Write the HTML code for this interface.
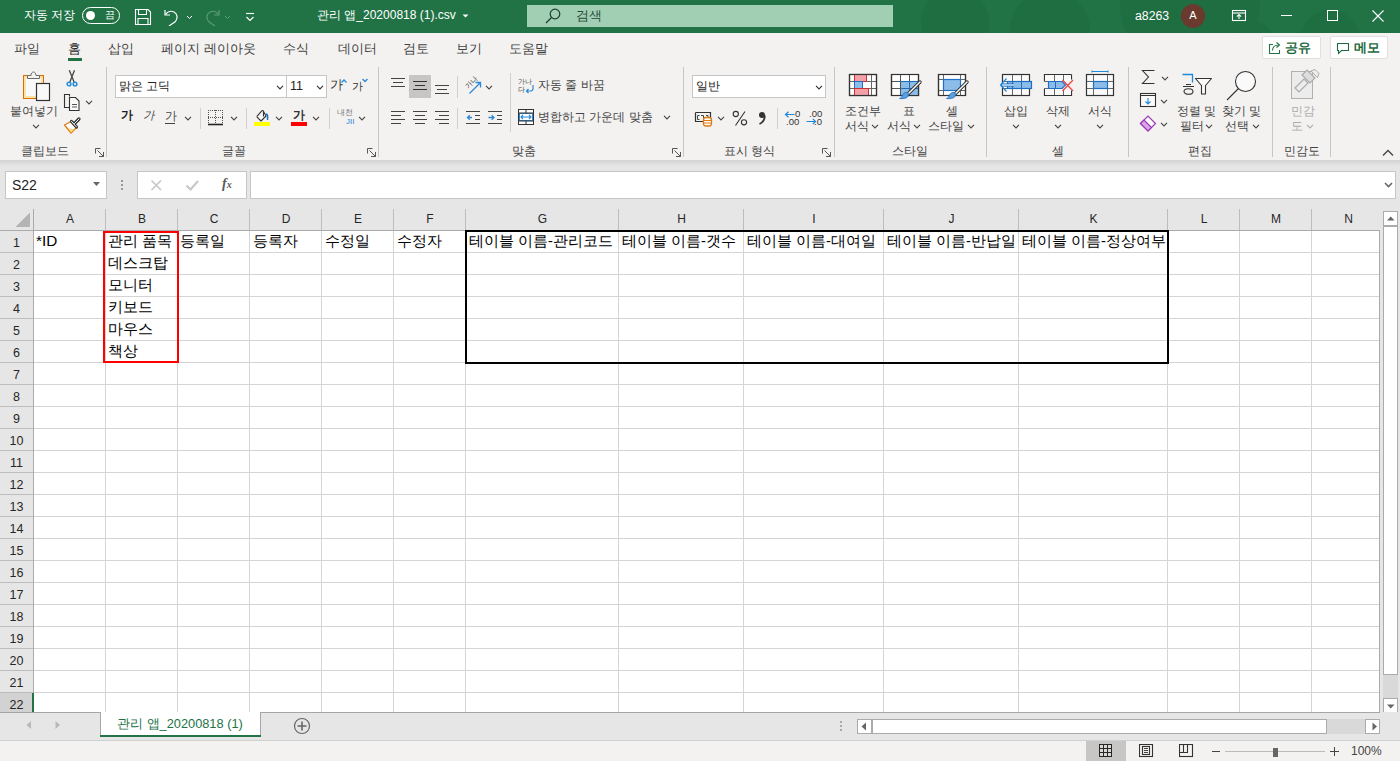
<!DOCTYPE html>
<html><head><meta charset="utf-8">
<style>
*{box-sizing:border-box;margin:0;padding:0}
html,body{width:1400px;height:761px;overflow:hidden;background:#f3f2f1;font-family:"Liberation Sans",sans-serif;color:#262626}
.a{position:absolute}
.t{position:absolute;white-space:nowrap;line-height:1}
#title{left:0;top:0;width:1400px;height:33px;background:#217346;overflow:hidden}
#menu{left:0;top:32px;width:1400px;height:30px}
#ribbon{left:0;top:62px;width:1400px;height:98px}
#fbar{left:0;top:160px;width:1400px;height:49px;background:#e6e6e6}
#grid{left:0;top:209px;width:1400px;height:503px;background:#fff}
#tabs{left:0;top:712px;width:1400px;height:28px;background:#e6e6e6}
#status{left:0;top:741px;width:1400px;height:20px;background:#f3f2f1}
.sep{position:absolute;width:1px;background:#c8c6c4}
.hd{text-align:center;font-size:12px;color:#262626}
.rn{left:0;width:33px;text-align:center;font-size:12.5px;color:#262626;margin-top:1px}
.cell{font-size:14.67px;color:#000}
.mt{top:10px;font-size:13px;color:#424242}
.lbl{font-size:12px;color:#444}
</style></head><body>
<div id="title" class="a"><svg class="a" style="left:0;top:0" width="1400" height="33">
<g fill="#1e6a40" opacity="0.55">
<circle cx="955" cy="22" r="34"/><circle cx="1050" cy="30" r="40"/><circle cx="1190" cy="4" r="70"/><circle cx="1330" cy="40" r="30"/><circle cx="1255" cy="40" r="18"/>
</g>
</svg>
<div class="t" style="left:24px;top:9px;font-size:12px;color:#fff">자동 저장</div>
<div class="a" style="left:82px;top:7px;width:38px;height:17px;border:1px solid #fff;border-radius:9px"></div>
<div class="a" style="left:86px;top:11px;width:9px;height:9px;background:#fff;border-radius:50%"></div>
<div class="t" style="left:105px;top:10px;font-size:10px;color:#fff">끔</div>
<svg class="a" style="left:134px;top:8px" width="18" height="18" fill="none" stroke="#fff" stroke-width="1.1">
<path d="M1.5 1.5h12.5l2.5 2.5v12.5h-15z"/><path d="M4.5 1.5v5h8v-5"/><path d="M4 16.5v-6h10v6"/>
</svg>
<svg class="a" style="left:162px;top:8px" width="34" height="18" fill="none" stroke="#fff" stroke-width="1.2">
<path d="M3 2v5h5"/><path d="M3.5 6.5C5.5 3.5 9 2.5 12 4c3.5 2 4 6 1.5 9.5L7 18"/><path d="M25 8l2.5 2.5L30 8" stroke-width="1"/>
</svg>
<svg class="a" style="left:202px;top:8px" width="34" height="18" fill="none" stroke="#5c9a78" stroke-width="1.2">
<path d="M17 2v5h-5"/><path d="M16.5 6.5C14.5 3.5 11 2.5 8 4c-3.5 2-4 6-1.5 9.5L13 18"/><path d="M23 8l2.5 2.5L28 8" stroke-width="1"/>
</svg>
<svg class="a" style="left:243px;top:10px" width="14" height="14" fill="none" stroke="#fff" stroke-width="1.1">
<path d="M3 3.5h8"/><path d="M3.5 7l3.5 3.5L10.5 7"/>
</svg>
<div class="t" style="left:317px;top:9px;font-size:12px;color:#fff">관리 앱_20200818 (1).csv</div>
<svg class="a" style="left:462px;top:13px" width="8" height="6"><path d="M0.5 1.5h6l-3 3z" fill="#fff"/></svg>
<div class="a" style="left:527px;top:5px;width:366px;height:22px;background:#a0cfb4"></div>
<svg class="a" style="left:544px;top:8px" width="18" height="17" fill="none" stroke="#1f3d2c" stroke-width="1.2">
<circle cx="11" cy="6" r="4.8"/><path d="M7.5 9.5L2 15"/>
</svg>
<div class="t" style="left:576px;top:9px;font-size:13px;color:#2b4a39">검색</div>
<div class="t" style="left:1135px;top:10px;font-size:12.3px;color:#fff">a8263</div>
<div class="a" style="left:1181px;top:4px;width:24px;height:24px;background:#6b3a2f;border-radius:50%"></div>
<div class="t" style="left:1181px;width:24px;text-align:center;top:10px;font-size:11px;color:#fff">A</div>
<svg class="a" style="left:1231px;top:9px" width="16" height="14" fill="none" stroke="#fff" stroke-width="1.1">
<rect x="1.5" y="1.5" width="13" height="10"/><path d="M1.5 4h13"/><path d="M8 10V5.5M5.8 7.7L8 5.5l2.2 2.2"/>
</svg>
<div class="a" style="left:1281px;top:15px;width:11px;height:1px;background:#fff"></div>
<div class="a" style="left:1327px;top:10px;width:11px;height:11px;border:1px solid #fff"></div>
<svg class="a" style="left:1372px;top:10px" width="12" height="12" stroke="#fff" stroke-width="1.1"><path d="M0.5 0.5l11 11M11.5 0.5l-11 11"/></svg>
</div><!--/title-->
<div id="menu" class="a"><div class="t mt" style="left:14px">파일</div>
<div class="t mt" style="left:68px;color:#1b1b1b">홈</div>
<div class="a" style="left:68px;top:26px;width:14px;height:3px;background:#217346"></div>
<div class="t mt" style="left:108px">삽입</div>
<div class="t mt" style="left:161px">페이지 레이아웃</div>
<div class="t mt" style="left:283px">수식</div>
<div class="t mt" style="left:338px">데이터</div>
<div class="t mt" style="left:403px">검토</div>
<div class="t mt" style="left:456px">보기</div>
<div class="t mt" style="left:509px">도움말</div>
<div class="a" style="left:1262px;top:4px;width:59px;height:23px;border:1px solid #e1dfdd;background:#fff;border-radius:2px"></div>
<svg class="a" style="left:1268px;top:9px" width="14" height="14" fill="none" stroke="#217346" stroke-width="1.1">
<path d="M5 3.5H1.5v9h10V9"/><path d="M4.5 9.5c0-3.5 2.5-5.5 6-5.5"/><path d="M8.5 1.5l3 2.5-3 2.5"/>
</svg>
<div class="t" style="left:1285px;top:9px;font-size:13px;font-weight:bold;color:#1f6b40">공유</div>
<div class="a" style="left:1330px;top:4px;width:58px;height:23px;border:1px solid #e1dfdd;background:#fff;border-radius:2px"></div>
<svg class="a" style="left:1336px;top:10px" width="14" height="13" fill="none" stroke="#1f6b40" stroke-width="1.1">
<path d="M1.5 1.5h11v7h-7l-3 3v-3h-1z"/>
</svg>
<div class="t" style="left:1354px;top:9px;font-size:13px;font-weight:bold;color:#1f6b40">메모</div>
</div><!--/menu-->
<div id="ribbon" class="a"><div class="a" style="left:106px;top:5px;width:1px;height:90px;background:#c8c6c4"></div>
<div class="a" style="left:378px;top:5px;width:1px;height:90px;background:#c8c6c4"></div>
<div class="a" style="left:683px;top:5px;width:1px;height:90px;background:#c8c6c4"></div>
<div class="a" style="left:834px;top:5px;width:1px;height:90px;background:#c8c6c4"></div>
<div class="a" style="left:986px;top:5px;width:1px;height:90px;background:#c8c6c4"></div>
<div class="a" style="left:1128px;top:5px;width:1px;height:90px;background:#c8c6c4"></div>
<div class="a" style="left:1272px;top:5px;width:1px;height:90px;background:#c8c6c4"></div>
<div class="a" style="left:1330px;top:5px;width:1px;height:90px;background:#c8c6c4"></div>
<div class="t" style="left:21px;top:83px;font-size:12px;color:#444;">클립보드</div>
<div class="t" style="left:222px;top:83px;font-size:12px;color:#444;">글꼴</div>
<div class="t" style="left:512px;top:83px;font-size:12px;color:#444;">맞춤</div>
<div class="t" style="left:724px;top:83px;font-size:12px;color:#444;">표시 형식</div>
<div class="t" style="left:892px;top:83px;font-size:12px;color:#444;">스타일</div>
<div class="t" style="left:1052px;top:83px;font-size:12px;color:#444;">셀</div>
<div class="t" style="left:1188px;top:83px;font-size:12px;color:#444;">편집</div>
<div class="t" style="left:1284px;top:83px;font-size:12px;color:#444;">민감도</div>
<svg class="a" style="left:95px;top:86px" width="9" height="9"><path d="M0.5 0.5h5M0.5 0.5v5M2.5 2.5l6 6M8.5 4v4.5H4" fill="none" stroke="#555" stroke-width="1"/></svg>
<svg class="a" style="left:367px;top:86px" width="9" height="9"><path d="M0.5 0.5h5M0.5 0.5v5M2.5 2.5l6 6M8.5 4v4.5H4" fill="none" stroke="#555" stroke-width="1"/></svg>
<svg class="a" style="left:672px;top:86px" width="9" height="9"><path d="M0.5 0.5h5M0.5 0.5v5M2.5 2.5l6 6M8.5 4v4.5H4" fill="none" stroke="#555" stroke-width="1"/></svg>
<svg class="a" style="left:822px;top:86px" width="9" height="9"><path d="M0.5 0.5h5M0.5 0.5v5M2.5 2.5l6 6M8.5 4v4.5H4" fill="none" stroke="#555" stroke-width="1"/></svg>
<svg class="a" style="left:1382px;top:87px" width="12" height="8"><path d="M1 6.5l5-5 5 5" fill="none" stroke="#444" stroke-width="1.3"/></svg>
<svg class="a" style="left:21px;top:7px" width="32" height="34"><rect x="2.5" y="6.5" width="20" height="23" fill="#fbe3a8" stroke="#d96f00" stroke-width="1"/><rect x="5" y="9" width="15" height="18" fill="#f9f9f9"/><path d="M6.5 9.5v-3h3.5c0-2 1.2-3.5 2.5-3.5s2.5 1.5 2.5 3.5h3.5v3z" fill="#f3f3f3" stroke="#6a6a6a" stroke-width="1"/><rect x="15.5" y="14.5" width="13" height="17" fill="#f9f9f9" stroke="#333" stroke-width="1.2"/></svg>
<div class="t" style="left:10px;top:43px;font-size:12px;color:#444;">붙여넣기</div>
<svg class="a" style="left:32px;top:62px" width="8" height="6"><path d="M1 0.9L4.0 3.9L7 0.9" fill="none" stroke="#444" stroke-width="1.1"/></svg>
<svg class="a" style="left:60px;top:4px" width="24" height="24"><path d="M9.3 4.2l5.4 13.3M14.5 4.2L9.3 17.5" fill="none" stroke="#444" stroke-width="1.3"/><circle cx="9" cy="18" r="1.9" fill="#cfe4f7" stroke="#1e88d8" stroke-width="1.4"/><circle cx="15" cy="18" r="1.9" fill="#cfe4f7" stroke="#1e88d8" stroke-width="1.4"/></svg>
<svg class="a" style="left:63px;top:31px" width="18" height="18"><path d="M6.5 3.5V1.5h-5v13h5" fill="none" stroke="#333" stroke-width="1.1"/><path d="M6.5 4.5h6l3.5 3.5v9.5h-9.5z" fill="#fafafa" stroke="#333" stroke-width="1.1"/><path d="M9 11.5h5M9 14h5" stroke="#555" stroke-width="1"/></svg>
<svg class="a" style="left:85px;top:38px" width="8" height="6"><path d="M1 0.9L4.0 3.9L7 0.9" fill="none" stroke="#444" stroke-width="1.1"/></svg>
<svg class="a" style="left:60px;top:52px" width="24" height="24"><path d="M4.5 11L11 7.5l5.5 6L11 19z" fill="#fff" stroke="#e07a10" stroke-width="1.3" stroke-linejoin="round"/><path d="M8 14.5l6.5 0.5L11 18.5z" fill="#fbd77a"/><path d="M19 5L14.5 9.5M11.5 7.5L16.5 13" stroke="#333" stroke-width="3.2" stroke-linecap="round"/><path d="M19 5L14.5 9.5M11.5 7.5L16.5 13" stroke="#fff" stroke-width="1" stroke-linecap="round"/></svg>
<div class="a" style="left:115px;top:13px;width:172px;height:23px;border:1px solid #c6c6c6;background:#fff"></div>
<div class="t" style="left:119px;top:18px;font-size:12px;color:#222;">맑은 고딕</div>
<svg class="a" style="left:276px;top:23px" width="8" height="6"><path d="M1 0.9L4.0 3.9L7 0.9" fill="none" stroke="#333" stroke-width="1.1"/></svg>
<div class="a" style="left:286px;top:13px;width:41px;height:23px;border:1px solid #c6c6c6;background:#fff"></div>
<div class="t" style="left:290px;top:18px;font-size:12.5px;color:#222;">11</div>
<svg class="a" style="left:316px;top:23px" width="8" height="6"><path d="M1 0.9L4.0 3.9L7 0.9" fill="none" stroke="#333" stroke-width="1.1"/></svg>
<div class="t" style="left:330px;top:17px;font-size:12.5px;color:#333;">가</div>
<svg class="a" style="left:341px;top:17px" width="7" height="5"><path d="M0.5 3.5l2.5-2.5 2.5 2.5" fill="none" stroke="#2b88d8" stroke-width="1.3"/></svg>
<div class="t" style="left:352px;top:19px;font-size:11px;color:#333;">가</div>
<svg class="a" style="left:362px;top:16px" width="7" height="5"><path d="M0.5 1l2.5 2.5L5.5 1" fill="none" stroke="#2b88d8" stroke-width="1.3"/></svg>
<div class="t" style="left:121px;top:48px;font-size:11.5px;color:#222;font-weight:bold">가</div>
<div class="t" style="left:143px;top:48px;font-size:11.5px;color:#444;font-style:italic">가</div>
<div class="t" style="left:165px;top:48px;font-size:12px;color:#444;">가</div>
<div class="a" style="left:165px;top:61px;width:10px;height:1px;background:#444"></div>
<svg class="a" style="left:184px;top:54px" width="8" height="6"><path d="M1 0.9L4.0 3.9L7 0.9" fill="none" stroke="#444" stroke-width="1.1"/></svg>
<div class="a" style="left:200px;top:46px;width:1px;height:21px;background:#d2d0ce"></div>
<svg class="a" style="left:207px;top:47px" width="17" height="17"><path d="M1.5 1v14M15.5 1v14M8.5 1v14M1 1.5h15M1 8.5h15" fill="none" stroke="#555" stroke-width="1" stroke-dasharray="1 1"/><path d="M1 15.5h15" stroke="#222" stroke-width="1.6"/></svg>
<svg class="a" style="left:230px;top:54px" width="8" height="6"><path d="M1 0.9L4.0 3.9L7 0.9" fill="none" stroke="#444" stroke-width="1.1"/></svg>
<div class="a" style="left:246px;top:46px;width:1px;height:21px;background:#d2d0ce"></div>
<svg class="a" style="left:254px;top:45px" width="16" height="16"><path d="M2.7 9.7L7.3 4.3c0.8-1 2-1.2 2.2 0.3v5M2.7 9.7L7 14l5-5-3-5.5" fill="#fafafa" stroke="#333" stroke-width="1.1" stroke-linejoin="round"/><path d="M12 7.3c1.5-0.5 1.8 2 1.5 5" fill="none" stroke="#1e6fc4" stroke-width="1.6" stroke-linecap="round"/></svg>
<div class="a" style="left:254px;top:60px;width:16px;height:4px;background:#ffff00"></div>
<svg class="a" style="left:275px;top:54px" width="8" height="6"><path d="M1 0.9L4.0 3.9L7 0.9" fill="none" stroke="#444" stroke-width="1.1"/></svg>
<div class="t" style="left:293px;top:47px;font-size:12px;color:#333;font-weight:bold">가</div>
<div class="a" style="left:291px;top:60px;width:16px;height:4px;background:#ff0000"></div>
<svg class="a" style="left:312px;top:54px" width="8" height="6"><path d="M1 0.9L4.0 3.9L7 0.9" fill="none" stroke="#444" stroke-width="1.1"/></svg>
<div class="a" style="left:329px;top:46px;width:1px;height:21px;background:#d2d0ce"></div>
<div class="t" style="left:337px;top:47px;font-size:8px;color:#777;">내천</div>
<div class="t" style="left:346px;top:56px;font-size:8px;color:#2b88d8;">JII</div>
<svg class="a" style="left:358px;top:54px" width="8" height="6"><path d="M1 0.9L4.0 3.9L7 0.9" fill="none" stroke="#444" stroke-width="1.1"/></svg>
<!--R2--><div class="a" style="left:409px;top:13px;width:22px;height:23px;background:#c8c6c4"></div>
<svg class="a" style="left:391px;top:16px" width="15" height="10"><rect x="0" y="0" width="14" height="1" fill="#444"/><rect x="2" y="4" width="10" height="1" fill="#444"/><rect x="0" y="8" width="14" height="1" fill="#444"/></svg>
<svg class="a" style="left:413px;top:19px" width="15" height="10"><rect x="0" y="0" width="14" height="1" fill="#333"/><rect x="2" y="4" width="10" height="1" fill="#333"/><rect x="0" y="8" width="14" height="1" fill="#333"/></svg>
<svg class="a" style="left:435px;top:23px" width="15" height="10"><rect x="0" y="0" width="14" height="1" fill="#444"/><rect x="2" y="4" width="10" height="1" fill="#444"/><rect x="0" y="8" width="14" height="1" fill="#444"/></svg>
<div class="a" style="left:457px;top:14px;width:1px;height:22px;background:#d2d0ce"></div>
<div class="t" style="left:464px;top:17px;font-size:7px;color:#444;"><span style="display:inline-block;transform:rotate(-45deg)">가나</span></div>
<svg class="a" style="left:468px;top:18px" width="15" height="15"><path d="M1.5 13.5L12.5 2.5M7.5 2.5h5v5" fill="none" stroke="#2b88d8" stroke-width="1.3"/></svg>
<svg class="a" style="left:485px;top:23px" width="8" height="6"><path d="M1 0.9L4.0 3.9L7 0.9" fill="none" stroke="#444" stroke-width="1.1"/></svg>
<svg class="a" style="left:391px;top:49px" width="15" height="14"><rect x="0" y="0" width="14" height="1" fill="#444"/><rect x="0" y="4" width="10" height="1" fill="#444"/><rect x="0" y="8" width="14" height="1" fill="#444"/><rect x="0" y="12" width="10" height="1" fill="#444"/></svg>
<svg class="a" style="left:413px;top:49px" width="15" height="14"><rect x="0" y="0" width="14" height="1" fill="#444"/><rect x="2" y="4" width="10" height="1" fill="#444"/><rect x="0" y="8" width="14" height="1" fill="#444"/><rect x="2" y="12" width="10" height="1" fill="#444"/></svg>
<svg class="a" style="left:435px;top:49px" width="15" height="14"><rect x="0" y="0" width="14" height="1" fill="#444"/><rect x="4" y="4" width="10" height="1" fill="#444"/><rect x="0" y="8" width="14" height="1" fill="#444"/><rect x="4" y="12" width="10" height="1" fill="#444"/></svg>
<div class="a" style="left:457px;top:46px;width:1px;height:21px;background:#d2d0ce"></div>
<svg class="a" style="left:466px;top:49px" width="15" height="14"><rect x="0" y="0" width="14" height="1" fill="#444"/><rect x="9" y="4" width="5" height="1" fill="#444"/><rect x="9" y="8" width="5" height="1" fill="#444"/><rect x="0" y="12" width="14" height="1" fill="#444"/><path d="M6 6.5H1.5M3.8 4.2L1.5 6.5l2.3 2.3" fill="none" stroke="#2b88d8" stroke-width="1.3"/></svg>
<svg class="a" style="left:488px;top:49px" width="15" height="14"><rect x="0" y="0" width="14" height="1" fill="#444"/><rect x="9" y="4" width="5" height="1" fill="#444"/><rect x="9" y="8" width="5" height="1" fill="#444"/><rect x="0" y="12" width="14" height="1" fill="#444"/><path d="M0.5 6.5H6M3.7 4.2L6 6.5 3.7 8.8" fill="none" stroke="#2b88d8" stroke-width="1.3"/></svg>
<div class="a" style="left:510px;top:11px;width:1px;height:59px;background:#d2d0ce"></div>
<div class="t" style="left:518px;top:16px;font-size:7px;color:#444;">가나</div>
<div class="t" style="left:518px;top:24px;font-size:7px;color:#444;">다</div>
<svg class="a" style="left:525px;top:22px" width="10" height="10"><path d="M8 1v3.5c0 1.5-1 2.5-2.5 2.5H1.5M3.5 5L1.5 7l2 2" fill="none" stroke="#2b88d8" stroke-width="1.2"/></svg>
<div class="t" style="left:538px;top:17px;font-size:12px;color:#444;">자동 줄 바꿈</div>
<svg class="a" style="left:518px;top:47px" width="16" height="16"><rect x="0.5" y="0.5" width="15" height="15" fill="#fff" stroke="#333"/><rect x="1" y="4" width="14" height="8" fill="#2b88d8"/><rect x="2" y="5" width="12" height="6" fill="#fff"/><path d="M0.5 4h15M0.5 12h15M8 0.5v3.5M8 12v3.5" stroke="#333"/><path d="M3 8h10M5 6l-2 2 2 2M11 6l2 2-2 2" fill="none" stroke="#2b88d8" stroke-width="1.1"/></svg>
<div class="t" style="left:538px;top:49px;font-size:12px;color:#444;">병합하고 가운데 맞춤</div>
<svg class="a" style="left:663px;top:53px" width="8" height="6"><path d="M1 0.9L4.0 3.9L7 0.9" fill="none" stroke="#444" stroke-width="1.1"/></svg>
<div class="a" style="left:692px;top:13px;width:134px;height:23px;border:1px solid #c6c6c6;background:#fff"></div>
<div class="t" style="left:696px;top:18px;font-size:12px;color:#222;">일반</div>
<svg class="a" style="left:815px;top:23px" width="8" height="6"><path d="M1 0.9L4.0 3.9L7 0.9" fill="none" stroke="#333" stroke-width="1.1"/></svg>
<svg class="a" style="left:694px;top:49px" width="20" height="16"><path d="M1.5 1.5h15v9" fill="none" stroke="#333" stroke-width="1.2"/><path d="M1.5 1.5v9h8" fill="none" stroke="#333" stroke-width="1.2"/><path d="M5.5 4.5h-2v4h2M7 4.5h2.5v4M12 4.5h2v2" fill="none" stroke="#333" stroke-width="0.9"/><rect x="9.5" y="6.5" width="8" height="8.5" rx="2.5" fill="#fff" stroke="#e07a10" stroke-width="1.3"/><path d="M9.5 9.5h8M9.5 12h8" stroke="#e07a10" stroke-width="1.1"/></svg>
<svg class="a" style="left:717px;top:54px" width="8" height="6"><path d="M1 0.9L4.0 3.9L7 0.9" fill="none" stroke="#444" stroke-width="1.1"/></svg>
<svg class="a" style="left:732px;top:48px" width="17" height="17"><circle cx="3.8" cy="4" r="2.6" fill="none" stroke="#333" stroke-width="1.1"/><circle cx="12" cy="12.3" r="2.6" fill="none" stroke="#333" stroke-width="1.1"/><path d="M13 1.5L3.5 15.5" stroke="#333" stroke-width="1.1"/></svg>
<svg class="a" style="left:757px;top:49px" width="10" height="15"><circle cx="5" cy="4" r="3" fill="#333"/><path d="M7.8 4.5c0 4-2 7-5.3 8.5" fill="none" stroke="#333" stroke-width="1.8"/></svg>
<div class="a" style="left:777px;top:46px;width:1px;height:21px;background:#d2d0ce"></div>
<svg class="a" style="left:784px;top:49px" width="18" height="16"><path d="M10.5 3.5H1.5M4.5 0.8L1.5 3.5l3 2.7" fill="none" stroke="#1e88d8" stroke-width="1.2"/></svg>
<div class="t" style="left:795px;top:47px;font-size:9.5px;color:#333;">0</div>
<div class="t" style="left:786px;top:55px;font-size:9.5px;color:#333;">.00</div>
<div class="t" style="left:809px;top:47px;font-size:9.5px;color:#333;">.00</div>
<svg class="a" style="left:806px;top:55px" width="12" height="9"><path d="M0.5 4.5h9M6.8 1.8l2.7 2.7-2.7 2.7" fill="none" stroke="#1e88d8" stroke-width="1.2"/></svg>
<div class="t" style="left:814px;top:55px;font-size:9.5px;color:#333;">.0</div>
<svg class="a" style="left:847px;top:10px" width="32" height="28"><rect x="2.5" y="2.5" width="27" height="21" fill="#fff" stroke="#333" stroke-width="1.2"/><path d="M7.5 3v20M24.5 3v20M3 9.5h26M3 16.5h26" stroke="#666"/><rect x="7.5" y="2.5" width="12" height="7" fill="#f4a0a8" stroke="#d32f2f"/><rect x="7.5" y="9.5" width="8" height="7" fill="#8bbde8" stroke="#1e6fc4"/><rect x="7.5" y="16.5" width="14" height="7" fill="#f4a0a8" stroke="#d32f2f"/><rect x="2.5" y="2.5" width="27" height="21" fill="none" stroke="#333" stroke-width="1.2"/></svg>
<div class="t" style="left:845px;top:43px;font-size:12px;color:#444;">조건부</div>
<div class="t" style="left:845px;top:58px;font-size:12px;color:#444;">서식</div>
<svg class="a" style="left:871px;top:62px" width="8" height="6"><path d="M1 0.9L4.0 3.9L7 0.9" fill="none" stroke="#444" stroke-width="1.1"/></svg>
<svg class="a" style="left:889px;top:10px" width="34" height="30"><rect x="2.5" y="2.5" width="27" height="21" fill="#fff" stroke="#333" stroke-width="1.2"/><rect x="11.5" y="9.5" width="18" height="14" fill="#8bbde8" stroke="#1e6fc4" stroke-width="1.1"/><path d="M11.5 3v6.5M20.5 3v20M3 9.5h8.5M3 16.5h26M11.5 9.5v14" stroke="#555"/><path d="M20.5 9.5v14M11.5 16.5h18" stroke="#1e6fc4" stroke-width="0.8"/><path d="M2.5 2.5h27v21h-27z" fill="none" stroke="#333" stroke-width="1.2"/><path d="M31 10L18 23" stroke="#333" stroke-width="3.4" stroke-linecap="round"/><path d="M31 10L18 23" stroke="#fff" stroke-width="1.4" stroke-linecap="round"/><path d="M19.5 21.5c-2-2-5-1-6 1.5-0.5 1.5-1 3-3 3.5 3 0.5 7 0 8.5-2z" fill="#5a9fe0" stroke="#1e6fc4" stroke-width="0.8"/></svg>
<div class="t" style="left:903px;top:43px;font-size:12px;color:#444;">표</div>
<div class="t" style="left:887px;top:58px;font-size:12px;color:#444;">서식</div>
<svg class="a" style="left:913px;top:62px" width="8" height="6"><path d="M1 0.9L4.0 3.9L7 0.9" fill="none" stroke="#444" stroke-width="1.1"/></svg>
<svg class="a" style="left:936px;top:10px" width="34" height="30"><rect x="2.5" y="2.5" width="27" height="21" fill="#fff" stroke="#333" stroke-width="1.2"/><path d="M7.5 3v20M3 7.5h26M3 18.5h26M24.5 3v20" stroke="#666"/><rect x="7.5" y="7.5" width="17" height="11" fill="#8bbde8" stroke="#1e6fc4" stroke-width="1.2"/><path d="M2.5 2.5h27v21h-27z" fill="none" stroke="#333" stroke-width="1.2"/><path d="M31 10L18 23" stroke="#333" stroke-width="3.4" stroke-linecap="round"/><path d="M31 10L18 23" stroke="#fff" stroke-width="1.4" stroke-linecap="round"/><path d="M19.5 21.5c-2-2-5-1-6 1.5-0.5 1.5-1 3-3 3.5 3 0.5 7 0 8.5-2z" fill="#5a9fe0" stroke="#1e6fc4" stroke-width="0.8"/></svg>
<div class="t" style="left:946px;top:43px;font-size:12px;color:#444;">셀</div>
<div class="t" style="left:928px;top:58px;font-size:12px;color:#444;">스타일</div>
<svg class="a" style="left:967px;top:62px" width="8" height="6"><path d="M1 0.9L4.0 3.9L7 0.9" fill="none" stroke="#444" stroke-width="1.1"/></svg>
<svg class="a" style="left:998px;top:10px" width="36" height="26"><rect x="4.5" y="2.5" width="27" height="21" fill="#fafafa" stroke="#333" stroke-width="1.2"/><path d="M14.5 3v20M23.5 3v20M5 9.5h26M5 16.5h26" stroke="#666"/><rect x="9.5" y="9.5" width="24" height="7" fill="#8bbde8" stroke="#1e6fc4" stroke-width="1.2"/><path d="M23.5 10v6M14.5 10v6" stroke="#1e6fc4"/><path d="M16 13H3" stroke="#1e6fc4" stroke-width="3.2"/><path d="M16 13H4" stroke="#fff" stroke-width="1.2"/><path d="M8.5 6.5L2.5 13l6 6.5" fill="none" stroke="#1e88d8" stroke-width="1.2"/></svg>
<div class="t" style="left:1004px;top:43px;font-size:12px;color:#444;">삽입</div>
<svg class="a" style="left:1012px;top:62px" width="8" height="6"><path d="M1 0.9L4.0 3.9L7 0.9" fill="none" stroke="#444" stroke-width="1.1"/></svg>
<svg class="a" style="left:1042px;top:10px" width="36" height="26"><path d="M2.5 9.5v-7h27M29.5 2.5v5M2.5 16.5v7h27v-5" fill="none" stroke="#333" stroke-width="1.2"/><rect x="3" y="3" width="26" height="6" fill="#fafafa"/><rect x="3" y="17" width="26" height="6" fill="#fafafa"/><path d="M12.5 3v6M21.5 3v6M12.5 17v6M21.5 17v6M2.5 9.5h18M2.5 16.5h18" stroke="#666"/><path d="M6.5 9.5h13.5l3.5 3.5-3.5 3.5H6.5z" fill="#8bbde8" stroke="#1e6fc4" stroke-width="1.2"/><path d="M13.5 10v6" stroke="#1e6fc4"/><path d="M20.5 8l10.5 11M31 8L20.5 19" stroke="#ec4848" stroke-width="1.3"/></svg>
<div class="t" style="left:1046px;top:43px;font-size:12px;color:#444;">삭제</div>
<svg class="a" style="left:1054px;top:62px" width="8" height="6"><path d="M1 0.9L4.0 3.9L7 0.9" fill="none" stroke="#444" stroke-width="1.1"/></svg>
<svg class="a" style="left:1084px;top:6px" width="32" height="30"><path d="M8 2.5v2M24 2.5v2M8 3.5h16" stroke="#1e88d8" stroke-width="1.2"/><rect x="2.5" y="6.5" width="27" height="21" fill="#fafafa" stroke="#333" stroke-width="1.2"/><path d="M9.5 7v20M23.5 7v20M3 13.5h26M3 20.5h26" stroke="#666"/><rect x="9.5" y="13.5" width="14" height="7" fill="#8bbde8" stroke="#1e6fc4" stroke-width="1.2"/></svg>
<div class="t" style="left:1088px;top:43px;font-size:12px;color:#444;">서식</div>
<svg class="a" style="left:1096px;top:62px" width="8" height="6"><path d="M1 0.9L4.0 3.9L7 0.9" fill="none" stroke="#444" stroke-width="1.1"/></svg>
<svg class="a" style="left:1140px;top:6px" width="16" height="18"><path d="M14.5 2.5H2.5L8.5 9 2.5 15.5h12" fill="none" stroke="#333" stroke-width="1.1"/></svg>
<svg class="a" style="left:1161px;top:14px" width="8" height="6"><path d="M1 0.9L4.0 3.9L7 0.9" fill="none" stroke="#444" stroke-width="1.1"/></svg>
<svg class="a" style="left:1139px;top:30px" width="18" height="16"><rect x="1.5" y="1.5" width="15" height="13" fill="#fafafa" stroke="#333" stroke-width="1.1"/><path d="M1.5 3.5h15" stroke="#333"/><path d="M9 6v6M6.5 9.5L9 12l2.5-2.5" fill="none" stroke="#1e88d8" stroke-width="1.1"/></svg>
<svg class="a" style="left:1160px;top:37px" width="8" height="6"><path d="M1 0.9L4.0 3.9L7 0.9" fill="none" stroke="#444" stroke-width="1.1"/></svg>
<svg class="a" style="left:1139px;top:52px" width="18" height="18"><path d="M1.5 9.5L9 2l7.5 7.5L9 17z" fill="#fafafa" stroke="#9b36b7" stroke-width="1.2"/><path d="M1.5 9.5L5 6l7.5 7.5L9 17z" fill="#d9a6e6" stroke="#9b36b7" stroke-width="1.2"/></svg>
<svg class="a" style="left:1160px;top:60px" width="8" height="6"><path d="M1 0.9L4.0 3.9L7 0.9" fill="none" stroke="#444" stroke-width="1.1"/></svg>
<svg class="a" style="left:1180px;top:10px" width="34" height="26"><path d="M2.5 2.5h10v8" fill="none" stroke="#1e88d8" stroke-width="1.3"/><path d="M3 14.5h11M6 12.5h5" stroke="#333" stroke-width="1.1"/><ellipse cx="8.5" cy="19.5" rx="4.5" ry="2.8" fill="none" stroke="#333" stroke-width="1.1"/><path d="M15.5 6.5h16l-6 7v8.5h-4V13.5z" fill="#fafafa" stroke="#333" stroke-width="1.1" stroke-linejoin="round"/></svg>
<svg class="a" style="left:1225px;top:7px" width="34" height="34"><circle cx="20.5" cy="12.5" r="10" fill="#fafafa" stroke="#333" stroke-width="1.1"/><path d="M13.5 19.5L2 31" stroke="#333" stroke-width="1.1"/></svg>
<div class="t" style="left:1177px;top:43px;font-size:12px;color:#444;">정렬 및</div>
<div class="t" style="left:1180px;top:58px;font-size:12px;color:#444;">필터</div>
<svg class="a" style="left:1205px;top:62px" width="8" height="6"><path d="M1 0.9L4.0 3.9L7 0.9" fill="none" stroke="#444" stroke-width="1.1"/></svg>
<div class="t" style="left:1222px;top:43px;font-size:12px;color:#444;">찾기 및</div>
<div class="t" style="left:1225px;top:58px;font-size:12px;color:#444;">선택</div>
<svg class="a" style="left:1252px;top:62px" width="8" height="6"><path d="M1 0.9L4.0 3.9L7 0.9" fill="none" stroke="#444" stroke-width="1.1"/></svg>
<svg class="a" style="left:1290px;top:7px" width="30" height="31"><path d="M1.5 2.5h11M1.5 2.5v27h21V17" fill="#eeeeee" stroke="#aaa"/><rect x="1.5" y="2.5" width="21" height="27" fill="#ececec" stroke="#b0b0b0"/><path d="M5 19l9-9 4 4-9 9z" fill="#ececec" stroke="#aaa" stroke-width="1.2"/><path d="M12 6l5-5 8 8-5 5z" fill="#ddd" stroke="#aaa" stroke-width="1.2"/><path d="M21 2l4-1.5 4 4-1.5 4z" fill="#eee" stroke="#aaa"/></svg>
<div class="t" style="left:1291px;top:43px;font-size:12px;color:#aaa;">민감</div>
<div class="t" style="left:1291px;top:58px;font-size:12px;color:#aaa;">도</div>
<svg class="a" style="left:1306px;top:62px" width="8" height="6"><path d="M1 0.9L4.0 3.9L7 0.9" fill="none" stroke="#aaa" stroke-width="1.1"/></svg><!--/R2-->
</div><!--/ribbon-->
<div id="fbar" class="a"><div class="a" style="left:0;top:0;width:1400px;height:6px;background:linear-gradient(#d2d2d2,#e6e6e6)"></div>
<div class="a" style="left:5px;top:11px;width:102px;height:28px;border:1px solid #c6c6c6;background:#fff"></div>
<div class="t" style="left:12px;top:18px;font-size:14px;color:#222">S22</div>
<svg class="a" style="left:93px;top:22px" width="8" height="5"><path d="M0 0h7l-3.5 4z" fill="#666"/></svg>
<svg class="a" style="left:121px;top:20px" width="3" height="11"><rect x="0" y="0" width="2" height="2" fill="#999"/><rect x="0" y="4" width="2" height="2" fill="#999"/><rect x="0" y="8" width="2" height="2" fill="#999"/></svg>
<div class="a" style="left:137px;top:11px;width:110px;height:28px;border:1px solid #c6c6c6;background:#fff"></div>
<svg class="a" style="left:150px;top:19px" width="13" height="12"><path d="M1.5 1.5l9.5 9.5M11 1.5L1.5 11" stroke="#c8c8c8" stroke-width="1.7"/></svg>
<svg class="a" style="left:185px;top:19px" width="14" height="12"><path d="M1.5 6.5l4 4 7.5-8.5" fill="none" stroke="#c8c8c8" stroke-width="2.2"/></svg>
<div class="t" style="left:222px;top:177px;font-size:14px;color:#5a5a5a;font-family:'Liberation Serif',serif;font-style:italic;font-weight:bold;top:17px">f<span style="font-size:10px">x</span></div>
<div class="a" style="left:250px;top:11px;width:1146px;height:28px;border:1px solid #c6c6c6;background:#fff"></div>
<svg class="a" style="left:1384px;top:22px" width="9" height="6"><path d="M1 1l3.5 3.5L8 1" fill="none" stroke="#666" stroke-width="1.6"/></svg></div><!--/fbar-->
<div id="grid" class="a"><svg class="a" style="left:0;top:0" width="1400" height="503" shape-rendering="crispEdges">
<rect x="0" y="0" width="1379" height="21" fill="#e6e6e6"/>
<rect x="0" y="21" width="33" height="482" fill="#e6e6e6"/>
<rect x="0" y="484" width="33" height="19" fill="#d2d2d2"/>
<rect x="1379" y="0" width="21" height="503" fill="#e6e6e6"/>
<rect x="34" y="43" width="1345" height="1" fill="#d4d4d4"/>
<rect x="0" y="43" width="33" height="1" fill="#bdbdbd"/>
<rect x="34" y="65" width="1345" height="1" fill="#d4d4d4"/>
<rect x="0" y="65" width="33" height="1" fill="#bdbdbd"/>
<rect x="34" y="87" width="1345" height="1" fill="#d4d4d4"/>
<rect x="0" y="87" width="33" height="1" fill="#bdbdbd"/>
<rect x="34" y="109" width="1345" height="1" fill="#d4d4d4"/>
<rect x="0" y="109" width="33" height="1" fill="#bdbdbd"/>
<rect x="34" y="131" width="1345" height="1" fill="#d4d4d4"/>
<rect x="0" y="131" width="33" height="1" fill="#bdbdbd"/>
<rect x="34" y="153" width="1345" height="1" fill="#d4d4d4"/>
<rect x="0" y="153" width="33" height="1" fill="#bdbdbd"/>
<rect x="34" y="175" width="1345" height="1" fill="#d4d4d4"/>
<rect x="0" y="175" width="33" height="1" fill="#bdbdbd"/>
<rect x="34" y="197" width="1345" height="1" fill="#d4d4d4"/>
<rect x="0" y="197" width="33" height="1" fill="#bdbdbd"/>
<rect x="34" y="219" width="1345" height="1" fill="#d4d4d4"/>
<rect x="0" y="219" width="33" height="1" fill="#bdbdbd"/>
<rect x="34" y="241" width="1345" height="1" fill="#d4d4d4"/>
<rect x="0" y="241" width="33" height="1" fill="#bdbdbd"/>
<rect x="34" y="263" width="1345" height="1" fill="#d4d4d4"/>
<rect x="0" y="263" width="33" height="1" fill="#bdbdbd"/>
<rect x="34" y="285" width="1345" height="1" fill="#d4d4d4"/>
<rect x="0" y="285" width="33" height="1" fill="#bdbdbd"/>
<rect x="34" y="307" width="1345" height="1" fill="#d4d4d4"/>
<rect x="0" y="307" width="33" height="1" fill="#bdbdbd"/>
<rect x="34" y="329" width="1345" height="1" fill="#d4d4d4"/>
<rect x="0" y="329" width="33" height="1" fill="#bdbdbd"/>
<rect x="34" y="351" width="1345" height="1" fill="#d4d4d4"/>
<rect x="0" y="351" width="33" height="1" fill="#bdbdbd"/>
<rect x="34" y="373" width="1345" height="1" fill="#d4d4d4"/>
<rect x="0" y="373" width="33" height="1" fill="#bdbdbd"/>
<rect x="34" y="395" width="1345" height="1" fill="#d4d4d4"/>
<rect x="0" y="395" width="33" height="1" fill="#bdbdbd"/>
<rect x="34" y="417" width="1345" height="1" fill="#d4d4d4"/>
<rect x="0" y="417" width="33" height="1" fill="#bdbdbd"/>
<rect x="34" y="439" width="1345" height="1" fill="#d4d4d4"/>
<rect x="0" y="439" width="33" height="1" fill="#bdbdbd"/>
<rect x="34" y="461" width="1345" height="1" fill="#d4d4d4"/>
<rect x="0" y="461" width="33" height="1" fill="#bdbdbd"/>
<rect x="34" y="483" width="1345" height="1" fill="#d4d4d4"/>
<rect x="0" y="483" width="33" height="1" fill="#bdbdbd"/>
<rect x="105" y="22" width="1" height="481" fill="#d4d4d4"/>
<rect x="105" y="0" width="1" height="21" fill="#bdbdbd"/>
<rect x="177" y="22" width="1" height="481" fill="#d4d4d4"/>
<rect x="177" y="0" width="1" height="21" fill="#bdbdbd"/>
<rect x="249" y="22" width="1" height="481" fill="#d4d4d4"/>
<rect x="249" y="0" width="1" height="21" fill="#bdbdbd"/>
<rect x="321" y="22" width="1" height="481" fill="#d4d4d4"/>
<rect x="321" y="0" width="1" height="21" fill="#bdbdbd"/>
<rect x="393" y="22" width="1" height="481" fill="#d4d4d4"/>
<rect x="393" y="0" width="1" height="21" fill="#bdbdbd"/>
<rect x="465" y="22" width="1" height="481" fill="#d4d4d4"/>
<rect x="465" y="0" width="1" height="21" fill="#bdbdbd"/>
<rect x="618" y="22" width="1" height="481" fill="#d4d4d4"/>
<rect x="618" y="0" width="1" height="21" fill="#bdbdbd"/>
<rect x="743" y="22" width="1" height="481" fill="#d4d4d4"/>
<rect x="743" y="0" width="1" height="21" fill="#bdbdbd"/>
<rect x="883" y="22" width="1" height="481" fill="#d4d4d4"/>
<rect x="883" y="0" width="1" height="21" fill="#bdbdbd"/>
<rect x="1018" y="22" width="1" height="481" fill="#d4d4d4"/>
<rect x="1018" y="0" width="1" height="21" fill="#bdbdbd"/>
<rect x="1167" y="22" width="1" height="481" fill="#d4d4d4"/>
<rect x="1167" y="0" width="1" height="21" fill="#bdbdbd"/>
<rect x="1239" y="22" width="1" height="481" fill="#d4d4d4"/>
<rect x="1239" y="0" width="1" height="21" fill="#bdbdbd"/>
<rect x="1311" y="22" width="1" height="481" fill="#d4d4d4"/>
<rect x="1311" y="0" width="1" height="21" fill="#bdbdbd"/>
<rect x="0" y="21" width="1379" height="1" fill="#ababab"/>
<rect x="33" y="0" width="1" height="503" fill="#ababab"/>
<rect x="1379" y="21" width="1" height="483" fill="#ababab"/>
<rect x="0" y="503" width="1380" height="1" fill="#ababab"/>
<polygon points="30,3.5 30,18 16,18" fill="#b4b4b4"/>
<rect x="32" y="484" width="2" height="19" fill="#217346"/>
</svg>
<div class="t hd" style="left:34px;width:72px;top:4px">A</div>
<div class="t hd" style="left:106px;width:72px;top:4px">B</div>
<div class="t hd" style="left:178px;width:72px;top:4px">C</div>
<div class="t hd" style="left:250px;width:72px;top:4px">D</div>
<div class="t hd" style="left:322px;width:72px;top:4px">E</div>
<div class="t hd" style="left:394px;width:72px;top:4px">F</div>
<div class="t hd" style="left:466px;width:153px;top:4px">G</div>
<div class="t hd" style="left:619px;width:125px;top:4px">H</div>
<div class="t hd" style="left:744px;width:140px;top:4px">I</div>
<div class="t hd" style="left:884px;width:135px;top:4px">J</div>
<div class="t hd" style="left:1019px;width:149px;top:4px">K</div>
<div class="t hd" style="left:1168px;width:72px;top:4px">L</div>
<div class="t hd" style="left:1240px;width:72px;top:4px">M</div>
<div class="t hd" style="left:1312px;width:73px;top:4px">N</div>
<div class="t rn" style="top:27px">1</div>
<div class="t rn" style="top:49px">2</div>
<div class="t rn" style="top:71px">3</div>
<div class="t rn" style="top:93px">4</div>
<div class="t rn" style="top:115px">5</div>
<div class="t rn" style="top:137px">6</div>
<div class="t rn" style="top:159px">7</div>
<div class="t rn" style="top:181px">8</div>
<div class="t rn" style="top:203px">9</div>
<div class="t rn" style="top:225px">10</div>
<div class="t rn" style="top:247px">11</div>
<div class="t rn" style="top:269px">12</div>
<div class="t rn" style="top:291px">13</div>
<div class="t rn" style="top:313px">14</div>
<div class="t rn" style="top:335px">15</div>
<div class="t rn" style="top:357px">16</div>
<div class="t rn" style="top:379px">17</div>
<div class="t rn" style="top:401px">18</div>
<div class="t rn" style="top:423px">19</div>
<div class="t rn" style="top:445px">20</div>
<div class="t rn" style="top:467px">21</div>
<div class="t rn" style="top:489px">22</div>
<div class="t cell" style="left:36px;top:24px;font-size:15.3px">*ID</div>
<div class="t cell" style="left:108px;top:25px">관리 품목</div>
<div class="t cell" style="left:108px;top:47px">데스크탑</div>
<div class="t cell" style="left:108px;top:69px">모니터</div>
<div class="t cell" style="left:108px;top:91px">키보드</div>
<div class="t cell" style="left:108px;top:113px">마우스</div>
<div class="t cell" style="left:108px;top:135px">책상</div>
<div class="t cell" style="left:180px;top:25px">등록일</div>
<div class="t cell" style="left:253px;top:25px">등록자</div>
<div class="t cell" style="left:325px;top:25px">수정일</div>
<div class="t cell" style="left:397px;top:25px">수정자</div>
<div class="t cell" style="left:469px;top:25px">테이블 이름-관리코드</div>
<div class="t cell" style="left:622px;top:25px">테이블 이름-갯수</div>
<div class="t cell" style="left:747px;top:25px">테이블 이름-대여일</div>
<div class="t cell" style="left:887px;top:25px">테이블 이름-반납일</div>
<div class="t cell" style="left:1022px;top:25px">테이블 이름-정상여부</div>
<div class="a" style="left:103px;top:22px;width:76px;height:132px;border:2px solid #ff0000"></div>
<div class="a" style="left:465px;top:21px;width:704px;height:134px;border:2px solid #000"></div><!--VS--><div class="a" style="left:1383px;top:2px;width:15px;height:501px;background:#d9d9d9"></div>
<div class="a" style="left:1383px;top:2px;width:15px;height:15px;background:#fff;border:1px solid #ababab"></div>
<svg class="a" style="left:1387px;top:7px" width="8" height="5"><path d="M0 4.5h7.5L3.75 0.5z" fill="#666"/></svg>
<div class="a" style="left:1383px;top:17px;width:15px;height:449px;background:#fff;border:1px solid #ababab"></div>
<div class="a" style="left:1383px;top:489px;width:15px;height:15px;background:#fff;border:1px solid #ababab"></div>
<svg class="a" style="left:1387px;top:495px" width="8" height="5"><path d="M0 0.5h7.5L3.75 4.5z" fill="#666"/></svg>
</div><!--/grid-->
<div id="tabs" class="a"><div class="a" style="left:0;top:0;width:1380px;height:1px;background:#a6a6a6"></div>
<div class="a" style="left:0;top:28px;width:1400px;height:1px;background:#d0d0d0"></div>
<svg class="a" style="left:26px;top:9px" width="6" height="9"><path d="M5 0v8L0.5 4z" fill="#b9b9b9"/></svg>
<svg class="a" style="left:55px;top:9px" width="6" height="9"><path d="M0.5 0v8L5 4z" fill="#b9b9b9"/></svg>
<div class="a" style="left:100px;top:0;width:161px;height:25px;background:#fff;border-left:1px solid #a6a6a6;border-right:1px solid #a6a6a6"></div>
<div class="a" style="left:100px;top:23px;width:161px;height:2px;background:#217346"></div>
<div class="t" style="left:117px;top:6px;font-size:12.8px;color:#217346">관리 앱_20200818 (1)</div>
<svg class="a" style="left:293px;top:5px" width="18" height="18"><circle cx="9" cy="9" r="7.5" fill="none" stroke="#666" stroke-width="1.2"/><path d="M9 4.5v9M4.5 9h9" stroke="#666" stroke-width="1.6"/></svg>
<svg class="a" style="left:840px;top:9px" width="3" height="12"><rect x="0" y="0" width="2" height="2" fill="#aaa"/><rect x="0" y="4" width="2" height="2" fill="#aaa"/><rect x="0" y="8" width="2" height="2" fill="#aaa"/></svg>
<div class="a" style="left:857px;top:7px;width:523px;height:15px;background:#d9d9d9"></div>
<div class="a" style="left:857px;top:7px;width:15px;height:15px;background:#fff;border:1px solid #ababab"></div>
<svg class="a" style="left:860px;top:10px" width="8" height="9"><path d="M6 0.5v8L1.5 4.5z" fill="#666"/></svg>
<div class="a" style="left:872px;top:7px;width:455px;height:15px;background:#fff;border:1px solid #ababab"></div>
<div class="a" style="left:1365px;top:7px;width:15px;height:15px;background:#fff;border:1px solid #ababab"></div>
<svg class="a" style="left:1371px;top:10px" width="8" height="9"><path d="M1.5 0.5v8L6 4.5z" fill="#666"/></svg></div><!--/tabs-->
<div id="status" class="a"><div class="a" style="left:1086px;top:0px;width:40px;height:20px;background:#c8c6c4"></div>
<svg class="a" style="left:1099px;top:3px" width="14" height="14"><rect x="0" y="0" width="13" height="13" fill="#262626"/><rect x="1" y="1" width="3" height="3" fill="#d8d8d8"/><rect x="1" y="5" width="3" height="3" fill="#d8d8d8"/><rect x="1" y="9" width="3" height="3" fill="#d8d8d8"/><rect x="5" y="1" width="3" height="3" fill="#d8d8d8"/><rect x="5" y="5" width="3" height="3" fill="#d8d8d8"/><rect x="5" y="9" width="3" height="3" fill="#d8d8d8"/><rect x="9" y="1" width="3" height="3" fill="#d8d8d8"/><rect x="9" y="5" width="3" height="3" fill="#d8d8d8"/><rect x="9" y="9" width="3" height="3" fill="#d8d8d8"/></svg>
<svg class="a" style="left:1139px;top:3px" width="15" height="14"><rect x="0.5" y="0.5" width="13" height="12" fill="none" stroke="#333" stroke-width="1.1"/><rect x="3.5" y="2.5" width="7" height="8" fill="none" stroke="#333" stroke-width="1.1"/><path d="M5 4.5h4M5 6.5h4M5 8.5h4" stroke="#444"/></svg>
<svg class="a" style="left:1179px;top:3px" width="15" height="14"><rect x="0.5" y="0.5" width="13" height="12" fill="none" stroke="#333" stroke-width="1.1"/><path d="M0.5 8.5h8v-8M4.5 0.5v8" fill="none" stroke="#333" stroke-width="1.1"/></svg>
<div class="a" style="left:1212px;top:10px;width:8px;height:1px;background:#444"></div>
<div class="a" style="left:1225px;top:10px;width:100px;height:1px;background:#bbb"></div>
<div class="a" style="left:1273px;top:7px;width:5px;height:9px;background:#666"></div>
<div class="a" style="left:1330px;top:10px;width:9px;height:1px;background:#444"></div>
<div class="a" style="left:1334px;top:6px;width:1px;height:9px;background:#444"></div>
<div class="t" style="left:1351px;top:4px;font-size:12px;color:#444">100%</div></div><!--/status-->
</body></html>
